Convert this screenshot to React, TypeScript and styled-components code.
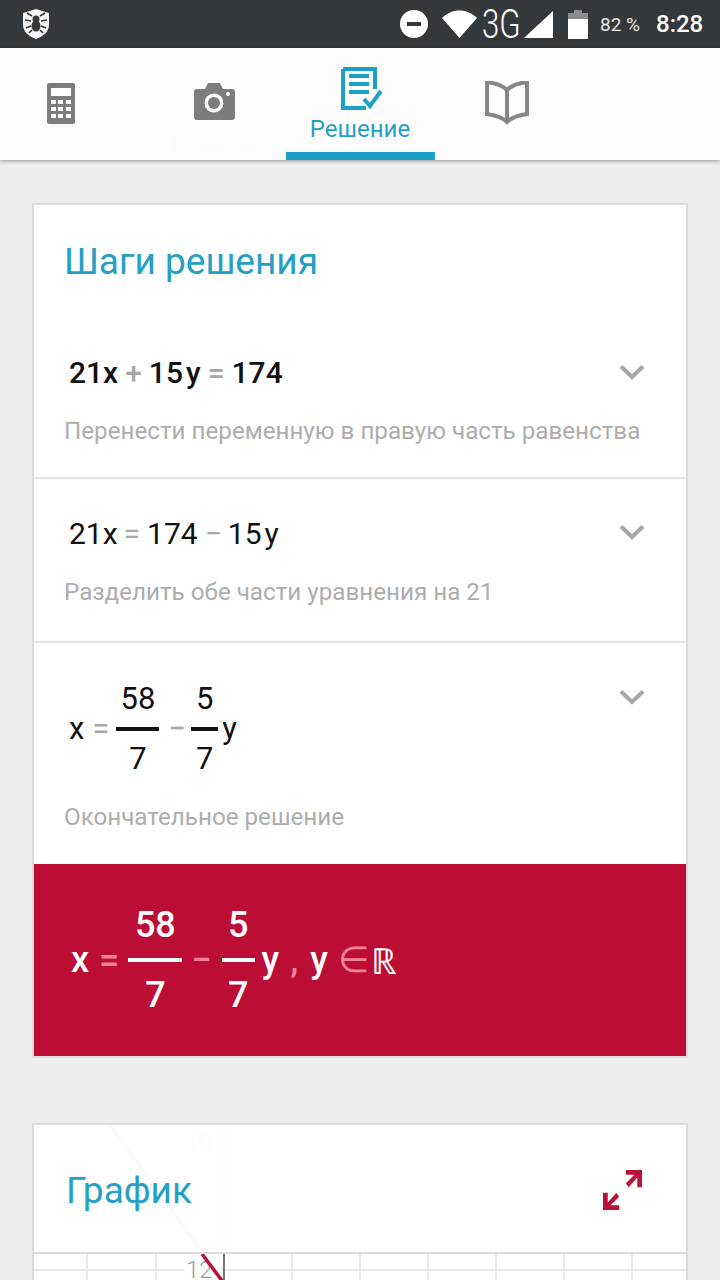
import styled, { createGlobalStyle } from "styled-components";

const GlobalStyle = createGlobalStyle`
  html, body {
    margin: 0;
    padding: 0;
    height: 1280px;
    overflow: hidden;
    background: #eeeeee;
    font-family: Roboto, "Liberation Sans", sans-serif;
  }
  * {
    box-sizing: border-box;
  }
`;

const Page = styled.div`
  width: 720px;
  height: 1280px;
  overflow: hidden;
  background: #eeeeee;
`;

const StatusBar = styled.div`
  height: 48px;
  background: #35383b;
  display: flex;
  align-items: center;
  padding: 0 17px 0 21px;
  color: #fff;
`;

const StatusRight = styled.div`
  margin-left: auto;
  display: flex;
  align-items: center;
`;

const ThreeG = styled.span`
  font-size: 41px;
  font-weight: 300;
  line-height: 32px;
  width: 37px;
  margin: 0 5px;
  display: inline-block;
  white-space: nowrap;
  transform: scaleX(0.76);
  transform-origin: left center;
`;

const BatteryText = styled.span`
  font-size: 19px;
  margin-left: 12px;
  width: 41px;
  white-space: nowrap;
  color: #e8e8e8;
`;

const Clock = styled.span`
  font-size: 24px;
  font-weight: 500;
  margin-left: 15px;
  width: 47px;
  white-space: nowrap;
`;

const Nav = styled.div`
  height: 112px;
  background: #fdfdfd;
  display: grid;
  grid-template-columns: 122px 164px 149px 144px;
  grid-template-rows: 112px;
  box-shadow: 0 1px 4px rgba(0, 0, 0, 0.4);
  position: relative;
`;

const Tab = styled.div<{ $active?: boolean; $shift?: number }>`
  display: flex;
  flex-direction: column;
  align-items: center;
  justify-content: flex-start;
  height: 112px;
  overflow: hidden;
  padding-top: ${(p) => (p.$active ? 19 : 33)}px;
  padding-left: ${(p) => p.$shift ?? 0}px;
  border-bottom: 8px solid ${(p) => (p.$active ? "#1ba0c8" : "transparent")};
`;

const TabLabel = styled.span<{ $ghost?: boolean }>`
  font-size: 24px;
  line-height: 28px;
  flex-shrink: 0;
  margin: ${(p) => (p.$ghost ? "11px 0 0" : "4px 0 0 -3px")};
  color: ${(p) => (p.$ghost ? "#fcfcfc" : "#25a0c5")};
`;

const Content = styled.div`
  padding: 43px 32px 0;
  display: flex;
  flex-direction: column;
  gap: 65px;
`;

const Card = styled.div`
  background: #fff;
  border: 2px solid #dcdcdc;
`;

const Title = styled.div`
  font-size: 37px;
  line-height: 40px;
  color: #25a0c5;
  padding: 37px 0 0 30px;
  height: 108px;
`;

const Step = styled.div<{ $height: number; $divider?: boolean }>`
  height: ${(p) => p.$height}px;
  border-bottom: ${(p) => (p.$divider ? "2px solid #e4e4e4" : "none")};
  padding: 0 41px 0 30px;
  display: flex;
  flex-direction: column;
`;

const StepTop = styled.div<{ $top: number }>`
  display: flex;
  align-items: flex-start;
  justify-content: space-between;
  margin-top: ${(p) => p.$top}px;
`;

const Chevron = styled.svg<{ $top: number }>`
  width: 26px;
  height: 16px;
  flex-shrink: 0;
  margin-top: ${(p) => p.$top}px;
`;

const MathLine = styled.div<{ $size: number; $bold?: boolean; $light?: boolean }>`
  display: flex;
  align-items: center;
  font-size: ${(p) => p.$size}px;
  font-weight: ${(p) => (p.$bold ? 500 : 400)};
  color: ${(p) => (p.$light ? "#fff" : "#111")};
  padding-left: 5px;
  white-space: nowrap;
`;

const Op = styled.span<{ $light?: boolean; $left: number; $right: number }>`
  color: ${(p) => (p.$light ? "#f0829a" : "#a8a8a8")};
  margin: 0 ${(p) => p.$right}px 0 ${(p) => p.$left}px;
`;

const Variable = styled.span<{ $left: number }>`
  margin-left: ${(p) => p.$left}px;
`;

const RealSet = styled.span`
  font-weight: 400;
  margin-left: -7px;
`;

const Frac = styled.span<{ $gap: number }>`
  display: inline-flex;
  flex-direction: column;
  align-items: center;
  line-height: 1;
  gap: ${(p) => p.$gap}px;
`;

const Bar = styled.span<{ $width: number; $light?: boolean }>`
  display: block;
  height: 4px;
  width: ${(p) => p.$width}px;
  background: ${(p) => (p.$light ? "#fff" : "#111")};
`;

const Desc = styled.div<{ $top: number }>`
  font-size: 24.2px;
  line-height: 30px;
  color: #adadad;
  margin-top: ${(p) => p.$top}px;
  white-space: nowrap;
`;

const Answer = styled.div`
  height: 192px;
  background: #bc0d35;
  padding: 0 0 0 32px;
  display: flex;
  align-items: center;
`;

const GraphHeader = styled.div`
  height: 129px;
  display: flex;
  align-items: center;
  justify-content: space-between;
  padding: 3px 43px 0 32px;
  border-bottom: 2px solid #dcdcdc;
  position: relative;
`;

const GraphGhost = styled.svg`
  position: absolute;
  left: 0;
  top: 0;
  width: 100%;
  height: 127px;
`;

const GraphTitle = styled.span`
  font-size: 37px;
  color: #25a0c5;
  position: relative;
`;

const GraphArea = styled.svg`
  display: block;
  width: 100%;
  height: 40px;
`;

const Fraction = ({
  top,
  width,
  gap,
  light,
}: {
  top: string;
  width: number;
  gap: number;
  light?: boolean;
}) => (
  <Frac $gap={gap}>
    <span>{top}</span>
    <Bar $width={width} $light={light} />
    <span>7</span>
  </Frac>
);

const Down = ({ top }: { top: number }) => (
  <Chevron $top={top} viewBox="0 0 26 16">
    <path d="M2 2.5 L13 13 L24 2.5" fill="none" stroke="#a6a6a6" strokeWidth="4" />
  </Chevron>
);

const gridX = [53, 122, 190, 258, 326, 394, 462, 530, 598];

const App = () => {
  return (
    <Page>
      <GlobalStyle />
      <StatusBar>
        <svg width="30" height="32" viewBox="0 0 30 32">
          <path d="M15 1 L28 5 V17 C28 24 21 29 15 31 C9 29 2 24 2 17 V5 Z" fill="#f4f4f4" />
          <circle cx="15" cy="11" r="3.5" fill="#35383b" />
          <ellipse cx="15" cy="18" rx="4.5" ry="5.5" fill="#35383b" />
          <path
            d="M11 8 L6 5 M19 8 L24 5 M10 13 L4 12 M20 13 L26 12 M10 18 L5 20 M20 18 L25 20 M11 22 L8 25 M19 22 L22 25"
            stroke="#35383b"
            strokeWidth="1.6"
          />
        </svg>
        <StatusRight>
          <svg width="28" height="28" viewBox="0 0 28 28">
            <circle cx="14" cy="14" r="14" fill="#fff" />
            <rect x="7" y="12" width="14" height="4" fill="#35383b" />
          </svg>
          <svg width="35" height="28" viewBox="0 0 35 28" style={{ marginLeft: 14 }}>
            <path d="M0 8 C10 -2 25 -2 35 8 L17.5 28 Z" fill="#fff" />
          </svg>
          <ThreeG>3G</ThreeG>
          <svg width="29" height="27" viewBox="0 0 29 27">
            <path d="M29 0 V27 H0 Z" fill="#fff" />
          </svg>
          <svg width="20" height="29" viewBox="0 0 20 29" style={{ marginLeft: 15 }}>
            <path d="M6 0 H14 V3 H20 V9 H0 V3 H6 Z" fill="#8a8c8e" />
            <rect y="9" width="20" height="20" fill="#fff" />
          </svg>
          <BatteryText>82 %</BatteryText>
          <Clock>8:28</Clock>
        </StatusRight>
      </StatusBar>

      <Nav>
        <Tab>
          <svg width="28" height="41" viewBox="0 0 28 41" style={{ marginTop: 2, flexShrink: 0 }}>
            <rect width="28" height="41" rx="2" fill="#7d7d7d" />
            <rect x="4" y="5" width="20" height="8" fill="#fdfdfd" />
            {[17, 24, 31].map((y) =>
              [4, 11, 19].map((x) => (
                <rect key={`${x}-${y}`} x={x} y={y} width="5" height="4" fill="#fdfdfd" />
              ))
            )}
          </svg>
        </Tab>
        <Tab $shift={20}>
          <svg width="41" height="37" viewBox="0 0 41 37" style={{ marginTop: 2, flexShrink: 0 }}>
            <path
              d="M3 6 H11 L14 0 H26 L29 6 H38 Q41 6 41 9 V34 Q41 37 38 37 H3 Q0 37 0 34 V9 Q0 6 3 6 Z"
              fill="#7d7d7d"
            />
            <circle cx="20" cy="20" r="9.5" fill="#fdfdfd" />
            <circle cx="20" cy="20" r="6" fill="#7d7d7d" />
            <circle cx="34" cy="11" r="2" fill="#fdfdfd" />
          </svg>
          <TabLabel $ghost>Камера</TabLabel>
        </Tab>
        <Tab $active $shift={2}>
          <svg width="42" height="44" viewBox="0 0 42 44" style={{ flexShrink: 0 }}>
            <path d="M2 2 H34 V22 M25 41 H2 V2" fill="none" stroke="#1ba0c8" strokeWidth="4" />
            <path d="M8 9 H28 M8 17 H28 M8 25 H28" stroke="#1ba0c8" strokeWidth="4" />
            <path d="M23 32 L29 39 L40 24" fill="none" stroke="#1ba0c8" strokeWidth="4" />
          </svg>
          <TabLabel>Решение</TabLabel>
        </Tab>
        <Tab>
          <svg width="44" height="44" viewBox="0 0 44 44" style={{ flexShrink: 0 }}>
            <path
              d="M22 9 C17 4 9 2 2 1 V33 C9 34 17 36 22 41 C27 36 35 34 42 33 V1 C35 2 27 4 22 9 Z M22 9 V41"
              fill="none"
              stroke="#878787"
              strokeWidth="4"
            />
          </svg>
        </Tab>
      </Nav>

      <Content>
        <Card>
          <Title>Шаги решения</Title>
          <Step $height={166} $divider>
            <StepTop $top={42}>
              <MathLine $size={30} $bold>
                21x
                <Op $left={7} $right={7}>+</Op>
                15
                <Variable $left={3}>y</Variable>
                <Op $left={7} $right={7}>=</Op>
                174
              </MathLine>
              <Down top={9} />
            </StepTop>
            <Desc $top={26}>Перенести переменную в правую часть равенства</Desc>
          </Step>
          <Step $height={164} $divider>
            <StepTop $top={37}>
              <MathLine $size={30}>
                21x
                <Op $left={6} $right={7}>=</Op>
                174
                <Op $left={7} $right={6}>−</Op>
                15
                <Variable $left={3}>y</Variable>
              </MathLine>
              <Down top={8} />
            </StepTop>
            <Desc $top={26}>Разделить обе части уравнения на 21</Desc>
          </Step>
          <Step $height={221}>
            <StepTop $top={40}>
              <MathLine $size={31}>
                x
                <Op $left={8} $right={7}>=</Op>
                <Fraction top="58" width={43} gap={12.5} />
                <Op $left={9} $right={5}>−</Op>
                <Fraction top="5" width={27} gap={12.5} />
                <Variable $left={4}>y</Variable>
              </MathLine>
              <Down top={6} />
            </StepTop>
            <Desc $top={28}>Окончательное решение</Desc>
          </Step>
          <Answer>
            <MathLine $size={36} $bold $light>
              x
              <Op $light $left={10} $right={9}>=</Op>
              <Fraction top="58" width={54} gap={15} light />
              <Op $light $left={9} $right={10}>−</Op>
              <Fraction top="5" width={33} gap={15} light />
              <Variable $left={7}>y</Variable>
              <Op $light $left={11} $right={12}>,</Op>
              y
              <Op $light $left={10} $right={9}>∈</Op>
              <RealSet>ℝ</RealSet>
            </MathLine>
          </Answer>
        </Card>

        <Card>
          <GraphHeader>
            <GraphGhost viewBox="0 0 652 127" preserveAspectRatio="xMinYMin">
              <line x1="76" y1="0" x2="168" y2="127" stroke="#fef9fa" strokeWidth="3" />
              <line x1="190" y1="0" x2="190" y2="127" stroke="#fcfcfc" strokeWidth="2" />
              <text x="152" y="24" fontSize="24" fontWeight="300" fill="#fcfcfc">16</text>
            </GraphGhost>
            <GraphTitle>График</GraphTitle>
            <svg width="40" height="40" viewBox="0 0 42 42" style={{ position: "relative" }}>
              <path
                d="M41 0 V18 H36 V8 L27 18 L24 14 L33 5 H24 V0 Z M0 42 V24 H5 V34 L14 24 L17 28 L8 37 H17 V42 Z"
                fill="#b8123a"
              />
            </svg>
          </GraphHeader>
          <GraphArea viewBox="0 0 652 40" preserveAspectRatio="xMinYMin">
            {gridX.map((x) => (
              <line key={x} x1={x} x2={x} y1="0" y2="40" stroke="#e8e8e8" strokeWidth="2" />
            ))}
            <line x1="0" x2="652" y1="16" y2="16" stroke="#e8e8e8" strokeWidth="2" />
            <rect x="150" y="6" width="38" height="34" fill="#fff" />
            <line x1="190" x2="190" y1="0" y2="40" stroke="#777" strokeWidth="2" />
            <text x="152" y="24" fontSize="24" fontWeight="300" fill="#999">
              12
            </text>
            <line x1="168" y1="0" x2="189" y2="28" stroke="#b8123a" strokeWidth="3.5" />
          </GraphArea>
        </Card>
      </Content>
    </Page>
  );
};

export default App;
